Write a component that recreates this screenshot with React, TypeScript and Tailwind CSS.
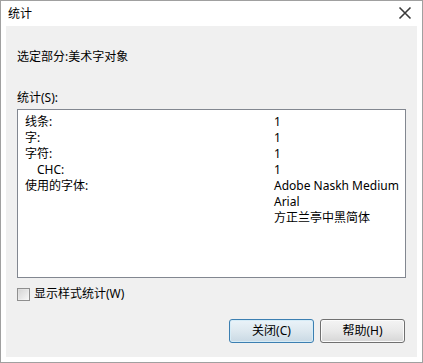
import React from 'react';

const font = { fontFamily: '"Noto Sans", "Noto Sans CJK SC", sans-serif' };

const rows = [
  { label: '线条:', value: '1' },
  { label: '字:', value: '1' },
  { label: '字符:', value: '1' },
  { label: 'CHC:', value: '1', indent: true },
  { label: '使用的字体:', value: 'Adobe Naskh Medium' },
  { label: '', value: 'Arial' },
  { label: '', value: '方正兰亭中黑简体' },
];

export default function App() {
  return (
    <div
      className="w-[423px] h-[363px] bg-white border border-[#a0a0a0] flex flex-col text-[12px] text-black leading-none"
      style={font}
    >
      {/* Title bar */}
      <div className="h-[25px] flex items-center justify-between pl-[7px] pr-[10px] shrink-0">
        <span className="text-[12px]">统计</span>
        <svg width="14" height="14" viewBox="0 0 14 14" className="mt-[-2px]">
          <path d="M1.5 1.5 L12.5 12.5 M12.5 1.5 L1.5 12.5" stroke="#3a3a3a" strokeWidth="1.6" />
        </svg>
      </div>

      {/* Body */}
      <div className="flex-1 mx-[5px] mb-[5px] bg-[#f0f0f0] flex flex-col pl-[11px] pr-[11px]">
        <div className="mt-[24px] h-[14px] flex items-center">选定部分:美术字对象</div>

        <div className="mt-[27px] h-[14px] flex items-center">统计(S):</div>

        <div className="mt-[4px] h-[169px] bg-white border border-[#828790] pt-[4px] pl-[7px]">
          {rows.map((r, i) => (
            <div key={i} className="h-[16px] flex items-center">
              <span className={`w-[249px] ${r.indent ? 'pl-[12px]' : ''}`}>{r.label}</span>
              <span>{r.value}</span>
            </div>
          ))}
        </div>

        <label className="mt-[8px] h-[16px] flex items-center gap-[4px]">
          <span className="w-[13px] h-[13px] border border-[#8f8f8f] bg-linear-to-br from-[#dcdcdc] to-[#f8f8f8] flex items-center justify-center">
            <span className="w-[9px] h-[9px] bg-linear-to-br from-[#d6d6d6] to-[#f4f4f4]" />
          </span>
          <span>显示样式统计(W)</span>
        </label>

        <div className="mt-[17px] flex justify-end gap-[6px] pr-[1px]">
          <button className="w-[85px] h-[24px] rounded-[3px] border border-[#3c7fb1] bg-linear-to-b from-[#eaf3f9] via-[#dde8ef] to-[#c9d9e4] text-[12px] shadow-[inset_0_0_0_1px_#d6ecf7]">
            关闭(C)
          </button>
          <button className="w-[85px] h-[24px] rounded-[3px] border border-[#707070] bg-linear-to-b from-[#f4f4f4] via-[#e9e9e9] to-[#d6d6d6] text-[12px] shadow-[inset_0_0_0_1px_#fbfbfb]">
            帮助(H)
          </button>
        </div>
      </div>
    </div>
  );
}
